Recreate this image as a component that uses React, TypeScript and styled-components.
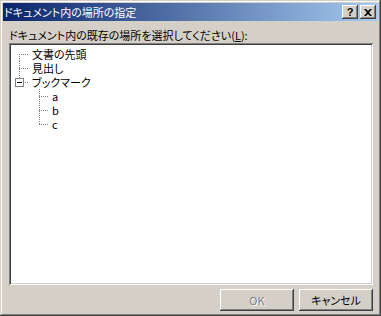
import { createGlobalStyle, styled } from 'styled-components';

const GlobalStyle = createGlobalStyle`
  html, body {
    margin: 0;
    padding: 0;
    background: #d4d0c8;
  }
  body {
    font-family: "Noto Sans CJK JP", "Liberation Sans", sans-serif;
    font-size: 11px;
    font-feature-settings: "palt";
  }
`;

const Window = styled.div`
  box-sizing: border-box;
  width: 381px;
  height: 316px;
  padding: 3px;
  display: flex;
  flex-direction: column;
  background: #d4d0c8;
  box-shadow:
    inset -1px -1px #404040,
    inset 1px 1px #d4d0c8,
    inset -2px -2px #808080,
    inset 2px 2px #ffffff;
`;

const TitleBar = styled.div`
  height: 18px;
  display: flex;
  align-items: center;
  padding: 0 2px 0 1px;
  background: linear-gradient(to right, #0a246a, #a6caf0);
`;

const Title = styled.span`
  flex: 1;
  color: #ffffff;
  line-height: 18px;
  white-space: nowrap;
`;

const CaptionButton = styled.button`
  box-sizing: border-box;
  width: 16px;
  height: 14px;
  margin-left: 2px;
  padding: 0;
  border: none;
  background: #d4d0c8;
  display: flex;
  align-items: center;
  justify-content: center;
  font-family: "Liberation Sans", sans-serif;
  font-weight: bold;
  font-size: 11px;
  line-height: 1;
  color: #000;
  box-shadow:
    inset -1px -1px #404040,
    inset 1px 1px #ffffff,
    inset -2px -2px #808080,
    inset 2px 2px #d4d0c8;
`;

const Body = styled.div`
  flex: 1;
  display: flex;
  flex-direction: column;
  padding: 7px 5px 2px 6px;
`;

const Label = styled.div`
  height: 14px;
  line-height: 14px;
  color: #000;
  white-space: nowrap;
  margin-bottom: 1px;

  u {
    text-decoration: underline;
    text-underline-offset: 1px;
  }
`;

const TreeBox = styled.div`
  flex: 1;
  background: #ffffff;
  padding: 2px;
  box-shadow:
    inset 1px 1px #808080,
    inset -1px -1px #ffffff,
    inset 2px 2px #404040,
    inset -2px -2px #d4d0c8;
  padding-top: 4px;
  padding-left: 2px;
`;

const Row = styled.div`
  height: 14px;
  display: flex;
  align-items: center;
`;

const dots = (dir: 'bottom' | 'right') =>
  `repeating-linear-gradient(to ${dir}, #808080 0 1px, transparent 1px 2px)`;

const Branch = styled.span<{ $first?: boolean; $last?: boolean; $cap?: boolean }>`
  position: relative;
  width: 20px;
  height: 14px;
  flex: none;

  &::before {
    content: '';
    position: absolute;
    left: 8px;
    width: 1px;
    top: ${(p) => (p.$first ? '7px' : '0')};
    bottom: ${(p) => (p.$last ? '7px' : '0')};
    display: ${(p) => (p.$first && p.$last ? 'none' : 'block')};
    background: ${dots('bottom')};
  }

  &::after {
    content: '';
    position: absolute;
    left: 8px;
    width: 10px;
    top: 7px;
    height: 1px;
    background: ${dots('right')};
  }
`;

const Toggle = styled.span`
  position: absolute;
  z-index: 1;
  left: 4px;
  top: 3px;
  box-sizing: border-box;
  width: 9px;
  height: 9px;
  border: 1px solid #808080;
  background: #ffffff;

  &::after {
    content: '';
    position: absolute;
    left: 1px;
    top: 3px;
    width: 5px;
    height: 1px;
    background: #000;
  }
`;

const Indent = styled.span`
  width: 20px;
  height: 14px;
  flex: none;
`;

const ItemText = styled.span`
  color: #000;
  line-height: 14px;
  padding-left: 1px;
  white-space: nowrap;
`;

const ButtonRow = styled.div`
  display: flex;
  justify-content: flex-end;
  gap: 5px;
  margin-top: 4px;
`;

const PushButton = styled.button<{ disabled?: boolean }>`
  box-sizing: border-box;
  width: 74px;
  height: 22px;
  border: none;
  padding: 0;
  background: #d4d0c8;
  font-family: "Noto Sans CJK JP", "Liberation Sans", sans-serif;
  font-size: 11px;
  font-feature-settings: "palt";
  color: ${(p) => (p.disabled ? '#808080' : '#000')};
  text-shadow: ${(p) => (p.disabled ? '1px 1px #ffffff' : 'none')};
  box-shadow:
    inset -1px -1px #404040,
    inset 1px 1px #ffffff,
    inset -2px -2px #808080,
    inset 2px 2px #d4d0c8;
`;

type Item = { label: string; level: number; first?: boolean; last?: boolean; open?: boolean };

const items: Item[] = [
  { label: '文書の先頭', level: 0, first: true },
  { label: '見出し', level: 0 },
  { label: 'ブックマーク', level: 0, last: true, open: true },
  { label: 'a', level: 1 },
  { label: 'b', level: 1 },
  { label: 'c', level: 1, last: true },
];

const App = () => (
  <>
    <GlobalStyle />
    <Window>
      <TitleBar>
        <Title>ドキュメント内の場所の指定</Title>
        <CaptionButton>?</CaptionButton>
        <CaptionButton>
          <svg width="8" height="7" viewBox="0 0 8 7">
            <path d="M0 0h2l2 2 2-2h2L5 3.5 8 7H6L4 5 2 7H0l3-3.5z" fill="#000" />
          </svg>
        </CaptionButton>
      </TitleBar>
      <Body>
        <Label>
          ドキュメント内の既存の場所を選択してください(<u>L</u>):
        </Label>
        <TreeBox>
          {items.map((it) => (
            <Row key={it.label}>
              {Array.from({ length: it.level }).map((_, i) => (
                <Indent key={i} />
              ))}
              <Branch $first={it.first} $last={it.last}>
                {it.open && <Toggle />}
              </Branch>
              <ItemText>{it.label}</ItemText>
            </Row>
          ))}
        </TreeBox>
        <ButtonRow>
          <PushButton disabled>OK</PushButton>
          <PushButton>キャンセル</PushButton>
        </ButtonRow>
      </Body>
    </Window>
  </>
);

export default App;
